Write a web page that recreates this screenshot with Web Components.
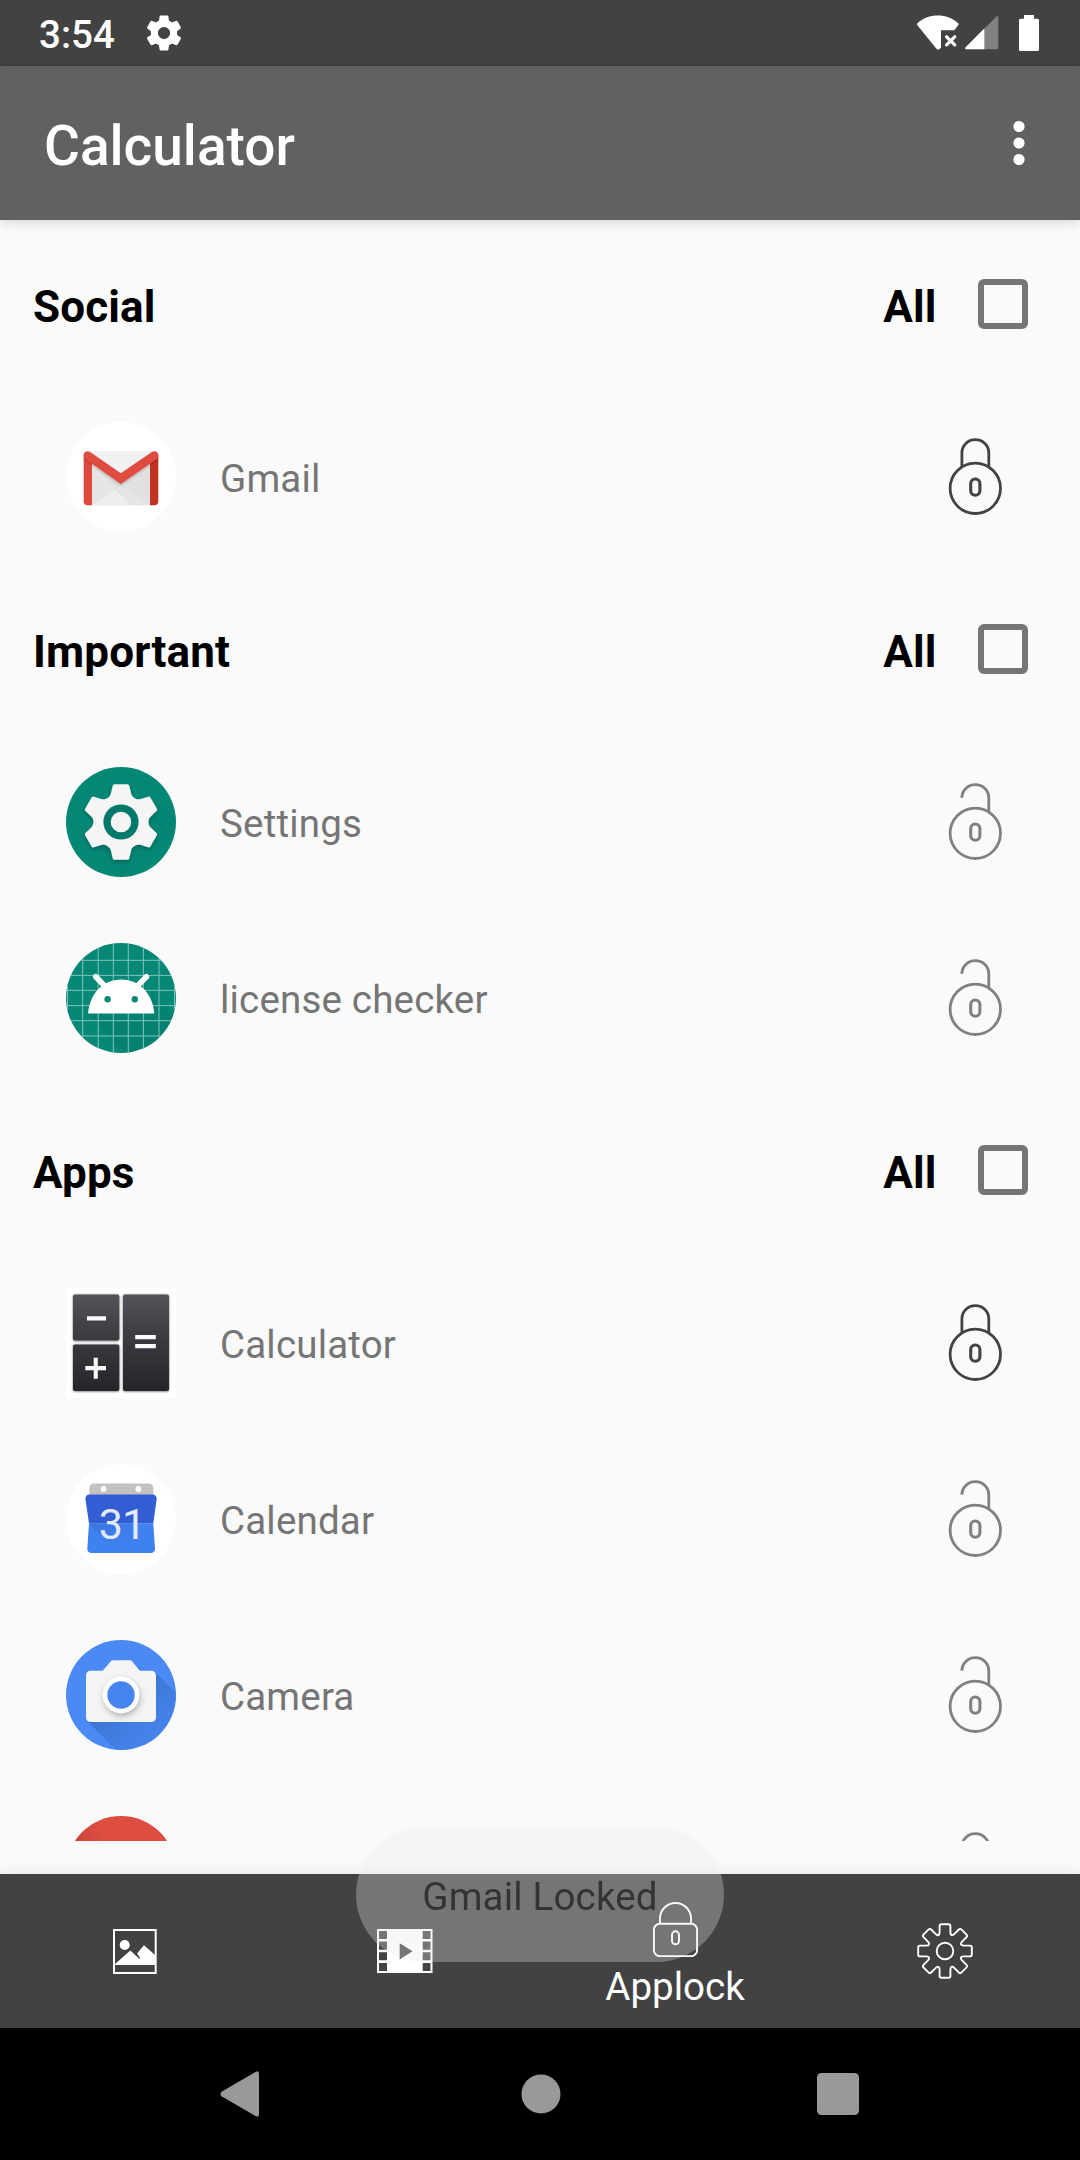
<!DOCTYPE html>
<html lang="en">
<head>
<meta charset="utf-8">
<title>Calculator</title>
<style>
html,body{margin:0;padding:0}
body{font-family:Roboto,"Noto Sans",sans-serif;width:1080px;height:2160px;overflow:hidden;background:#fafafa}
</style>
</head>
<body>
<phone-screen>
  <status-bar slot="top">3:54</status-bar>
  <app-bar slot="top">Calculator</app-bar>
  <app-section label="Social">
    <app-row icon="gmail" locked>Gmail</app-row>
  </app-section>
  <app-section label="Important">
    <app-row icon="settings">Settings</app-row>
    <app-row icon="android">license checker</app-row>
  </app-section>
  <app-section label="Apps">
    <app-row icon="calculator" locked>Calculator</app-row>
    <app-row icon="calendar">Calendar</app-row>
    <app-row icon="camera">Camera</app-row>
    <app-row icon="red"></app-row>
  </app-section>
  <tab-bar slot="bottom">
    <tab-item icon="image"></tab-item>
    <tab-item icon="film"></tab-item>
    <tab-item icon="lock">Applock</tab-item>
    <tab-item icon="gear"></tab-item>
  </tab-bar>
  <nav-bar slot="bottom"></nav-bar>
  <toast-message slot="toast">Gmail Locked</toast-message>
</phone-screen>
<script>
// Repeats one tooth (and the valley after it) around the origin.
function cog(n, pts) {
  const out = [];
  for (let k = 0; k < n; k++) {
    const a = k * 2 * Math.PI / n, c = Math.cos(a), s = Math.sin(a);
    for (const [cmd, ...v] of pts) {
      const r = [];
      for (let i = 0; i < v.length; i += 2) r.push((v[i]*c - v[i+1]*s).toFixed(2), (v[i]*s + v[i+1]*c).toFixed(2));
      out.push((k === 0 && cmd === 'M' ? 'M' : cmd === 'M' ? 'L' : cmd) + r.join(' '));
    }
  }
  return out.join('') + 'Z';
}
const outlineCog = cog(8, [['M',-5.4,-18.4],['L',-5.4,-25],['Q',-5.4,-26.8,-3.7,-26.8],['L',3.7,-26.8],['Q',5.4,-26.8,5.4,-25],['L',5.4,-18.4],['C',5.4,-15.6,7.4,-15.2,9.19,-16.83]]);
const solidCog = cog(6, [['M',-10.3,-27.8],['L',-8.3,-36.2],['Q',-8,-37.7,-6.5,-37.7],['L',6.5,-37.7],['Q',8,-37.7,8.3,-36.2],['L',10.3,-27.8],['C',11.2,-25,15.5,-22,18.93,-22.82]]);
const icons = {
gmail:`<defs><filter id="f" x="-10%" y="-10%" width="120%" height="140%"><feDropShadow dx="0" dy="1.5" stdDeviation="1.2" flood-opacity=".22"/></filter></defs><circle cx="55" cy="55" r="55" fill="#fff"/>
 <rect x="18" y="29.3" width="74" height="54" rx="4" fill="#e6e6e6"/>
 <path d="M26 83.3 55 64 84 83.3z" fill="#eee"/><path d="M26 42 64 83.3H84V40L55 62z" fill="#dcdcdc" opacity=".45"/>
 <path d="M22 29.3H88L55 51.5z" fill="#f1f1f1"/>
 <path d="M17.7 33V79.3a4 4 0 0 0 4 4H26V38z" fill="#df4a3f"/>
 <path d="M92.3 33V79.3a4 4 0 0 1-4 4H84V38z" fill="#c23321"/>
 <path filter="url(#f)" d="M17.7 33.3c0-3.6 3.6-5.2 6.4-3.2L54.8 51.2 85.900 30.100c2.800-2 6.400-.400 6.400 3.200 0 2-.8 3.200-2.400 4.300L54.800 62 20.100 37.600c-1.600-1.100-2.400-2.300-2.400-4.300z" fill="#e04b40"/>`,
settings:`<defs><linearGradient id="s" x2="1" y2="1"><stop offset=".3" stop-color="#00695c" stop-opacity=".55"/><stop offset=".8" stop-color="#00796b" stop-opacity="0"/></linearGradient><filter id="f"><feDropShadow dx="0" dy="2" stdDeviation="2" flood-opacity=".25"/></filter></defs>
 <circle cx="55" cy="55" r="55" fill="#058776"/><path d="M88 34 110 50V64L90 98 62 110 30 78z" fill="url(#s)" opacity=".35"/>
 <path d="${solidCog}" transform="translate(55 55)" fill="#f5f5f5" filter="url(#f)"/><circle cx="55" cy="55" r="17.6" fill="#00796b"/><circle cx="55" cy="55" r="10.3" fill="#f5f5f5"/>`,
android:`<defs><clipPath id="c"><circle cx="55" cy="55" r="55"/></clipPath></defs><circle cx="55" cy="55" r="55" fill="#078776"/>
 <g clip-path="url(#c)"><path d="M22 70 56 110H80L110 75 88 55z" fill="#006f62" opacity=".22"/>
 <path d="M1.500 0V110M16.700 0V110M32.200 0V110M47.300 0V110M62.300 0V110M77.400 0V110M93 0V110M108.500 0V110M0 17.300H110M0 32.400H110M0 47.300H110M0 62.600H110M0 77.700H110M0 93H110" stroke="#7fc4b9" stroke-width="1"/></g>
 <path d="M22 70.400C23.500 51 37 36.400 55.200 36.400S86.800 51 88.300 70.400z" fill="#fff"/><path d="M29.800 33.800 38.500 42.800M80.400 33.800 71.700 42.800" stroke="#fff" stroke-width="5.600" stroke-linecap="round"/>
 <circle cx="41.600" cy="56.300" r="3.200" fill="#078776"/><circle cx="68.800" cy="56.300" r="3.200" fill="#078776"/>`,
calculator:`<defs><linearGradient id="k" gradientUnits="userSpaceOnUse" x1="0" y1="6" x2="0" y2="103"><stop stop-color="#54545a"/><stop offset=".45" stop-color="#3b3a40"/><stop offset="1" stop-color="#26252a"/></linearGradient><filter id="f"><feDropShadow dx="0" dy=".5" stdDeviation=".8" flood-opacity=".6"/></filter></defs>
 <path d="M0 0H110V110H0z" fill="#fff"/><g fill="url(#k)" filter="url(#f)"><rect x="7" y="6.500" width="46.300" height="46" rx="2"/><rect x="7" y="56.500" width="46.300" height="46.500" rx="2"/><rect x="57" y="6.500" width="46" height="96.500" rx="2"/></g>
 <path d="M21 28.200h19v4.200H21zM19.300 78h20.700v4.200H19.300zM27.700 69.700h4.100v21h-4.100zM69.200 47h20.600v4.300H69.200zM69.200 55.900h20.600v4.300H69.200z" fill="#fafafa"/>`,
calendar:`<defs><linearGradient id="s" x2=".8" y2="1"><stop stop-color="#2d56c0" stop-opacity=".6"/><stop offset=".8" stop-color="#2d56c0" stop-opacity="0"/></linearGradient></defs><circle cx="55" cy="55" r="55" fill="#fff"/>
 <path d="M23.300 34V24a4.500 4.500 0 0 1 4.500-4.500H82.800A4.500 4.500 0 0 1 87.300 24V34z" fill="#c2c2c2"/><circle cx="37.500" cy="25" r="2.900" fill="#fff"/><circle cx="72.400" cy="25" r="2.900" fill="#fff"/>
 <path d="M23 59.300H87.300L89 84.700a4 4 0 0 1-4 4.200H25.300a4 4 0 0 1-4-4.200z" fill="#4081f0"/><path d="M23 59.300H65L75 88.900H53z" fill="url(#s)" opacity=".5"/>
 <path d="M19.400 34.800a4 4 0 0 1 4-4.300H86.700a4 4 0 0 1 4 4.300L87.300 59.300H23z" fill="#335dd3"/>
 <text x="56" y="75" text-anchor="middle" font-size="43" letter-spacing="-1" font-weight="400" font-family="Roboto" fill="#e2eafb">31</text>`,
camera:`<defs><clipPath id="c"><circle cx="55" cy="55" r="55"/></clipPath><linearGradient id="s" gradientUnits="userSpaceOnUse" x1="55" y1="55" x2="90" y2="100"><stop stop-color="#3466bd"/><stop offset="1" stop-color="#4380e8"/></linearGradient><filter id="f" x="-30%" y="-30%" width="160%" height="160%"><feDropShadow dx="1" dy="3" stdDeviation="3" flood-opacity=".28"/></filter></defs>
 <circle cx="55" cy="55" r="55" fill="#4b8af4"/><path clip-path="url(#c)" d="M89 32 120 63V120H60L21 81z" fill="url(#s)" opacity=".6"/>
 <path d="M24.500 30.700H36.700L44.700 21.500Q45.600 20.300 47.200 20.300H63.800Q65.300 20.300 66.300 21.500L73.700 30.700H85.500A4.500 4.500 0 0 1 90 35.200V77.500A4.500 4.500 0 0 1 85.500 82H24.500A4.500 4.500 0 0 1 20 77.500V35.200A4.500 4.500 0 0 1 24.500 30.700z" fill="#f4f4f4"/>
 <circle cx="55" cy="55" r="18.200" fill="#fff" filter="url(#f)"/><circle cx="55" cy="55" r="13.700" fill="#4684f0"/>`,
red:`<defs><linearGradient id="r" x1="0" y1=".3" x2=".4" y2="0"><stop stop-color="#bd4136"/><stop offset=".7" stop-color="#dd4d40"/></linearGradient></defs><circle cx="55" cy="55" r="55" fill="url(#r)"/>`
};
const tabs = {
image:[44,45,`<rect x="1" y="1" width="41.700" height="43" fill="none" stroke="#fff" stroke-width="2"/><circle cx="11.700" cy="16" r="5" fill="#fff"/><path d="M2 35 17.300 21.500 26.300 29.800 27.300 29 24 24.500 31 16.200 42 26V36H2z" fill="#fff"/>`],
film:[56,44,`<path fill="#fff" fill-rule="evenodd" d="M0 0H55.500V44H0zM2 2V10H10V2zM2 12.500V20.700H10V12.500zM2 23.300V31.300H10V23.300zM2 34V42H10V34zM45.700 2V10H53.500V2zM45.700 12.500V20.700H53.500V12.500zM45.700 23.300V31.300H53.500V23.300zM45.700 34V42H53.500V34zM22.700 14.200V30.200L35.600 22.200z"/>`],
lock:[45,55,`<g fill="none" stroke="#fff" stroke-width="1.900"><rect x=".9" y="21.700" width="43.200" height="32.500" rx="6"/><path d="M7 21.700V16.500a15.500 15.500 0 0 1 31 0V21.700"/><rect x="19" y="29.300" width="7" height="13" rx="3.500"/></g>`],
gear:[56,56,`<g transform="translate(28 28)" fill="none" stroke="#fff" stroke-width="1.900"><path d="${outlineCog}"/><circle r="8.300"/></g>`]
};
const define = (name, render) => customElements.define(name, class extends HTMLElement {
  constructor() { super(); this.attachShadow({mode:'open'}); }
  connectedCallback() { this.shadowRoot.innerHTML = render(this); }
});

define('phone-screen', () => `<style>
:host{display:flex;flex-direction:column;width:1080px;height:2160px;position:relative;background:#fafafa}
main{flex:1;min-height:0;display:flex;flex-direction:column;padding-bottom:33px}
.list{flex:1;min-height:0;overflow:hidden}
</style><slot name="top"></slot><main><div class="list"><slot></slot></div></main><slot name="bottom"></slot><slot name="toast"></slot>`);

define('status-bar', () => `<style>
:host{display:flex;align-items:center;height:66px;box-sizing:border-box;padding:0 41px 0 39px;background:#424242;color:#fff;font-size:38.500px;font-weight:500}
.t{width:104px;line-height:46px;padding-top:3px;white-space:nowrap}
svg{display:block}.sp{flex:1}.sig{margin-left:6px}.bat{margin-left:20px}
</style><span class="t"><slot></slot></span>
<svg width="42" height="42" viewBox="0 0 24 24" fill="#fff"><path d="M19.430 12.980c.040-.320.070-.640.070-.980s-.030-.660-.070-.980l2.110-1.650c.190-.150.240-.420.120-.640l-2-3.460c-.120-.220-.390-.300-.610-.220l-2.490 1c-.520-.400-1.080-.730-1.690-.980l-.380-2.650C14.460 2.180 14.250 2 14 2h-4c-.250 0-.460.180-.490.420l-.380 2.650c-.610.250-1.170.590-1.690.980l-2.490-1c-.230-.090-.490 0-.610.220l-2 3.460c-.130.220-.070.490.120.640l2.110 1.650c-.040.320-.070.650-.070.980s.030.660.070.980l-2.110 1.650c-.190.150-.240.420-.120.640l2 3.460c.120.220.390.300.610.220l2.490-1c.520.400 1.080.730 1.690.980l.380 2.650c.030.240.240.420.490.420h4c.250 0 .460-.180.490-.420l.380-2.650c.610-.250 1.170-.590 1.690-.980l2.490 1c.230.090.490 0 .610-.220l2-3.460c.120-.220.070-.490-.120-.640zM12 15.500a3.500 3.500 0 1 1 0-7 3.500 3.500 0 0 1 0 7z"/></svg>
<span class="sp"></span>
<svg width="42" height="36" viewBox="0 0 42 36"><path d="M.4 8.200C5.800 3 13 .400 20.800.400S35.800 3 41.200 8.200Q42 9.200 41.200 10.300L37.300 15.200H24V32.500Q21.500 36.500 18.800 33L.4 10.300Q-.3 9.200.400 8.200z" fill="#fff"/><path d="M29.600 21.800 37.700 29.900M37.700 21.800 29.600 29.900" stroke="#fff" stroke-width="3.200" stroke-linecap="round"/></svg>
<svg class="sig" width="34" height="34" viewBox="0 0 34 34"><path d="M31.500.500Q33.300-.5 33.300 1.500V31.800Q33.300 33.300 31.800 33.300H1.500Q-.8 33.300.7 31.300z" fill="#818181"/><path d="M19.300 12.500V33.300H1.500Q-.8 33.300.7 31.300z" fill="#fff"/></svg>
<svg class="bat" width="20" height="36" viewBox="0 0 20 36"><path d="M5 0H15V3.700H18.500Q20 3.700 20 5.200V34.500Q20 36 18.500 36H1.500Q0 36 0 34.500V5.200Q0 3.700 1.500 3.700H5z" fill="#fff"/></svg>`);

define('app-bar', () => `<style>
:host{display:flex;align-items:center;justify-content:space-between;height:154px;box-sizing:border-box;padding:0 55px 0 44px;background:#616161;color:#fff;font-size:55px;font-weight:500;box-shadow:0 2px 11px rgba(0,0,0,.16);position:relative;z-index:1}
span{line-height:64px;padding-top:5px}svg{display:block}
</style><span><slot></slot></span><svg width="12" height="46" fill="#fff"><circle cx="6" cy="6.500" r="5.600"/><circle cx="6" cy="23" r="5.600"/><circle cx="6" cy="39.500" r="5.600"/></svg>`);

define('app-section', el => `<style>
:host{display:block}
header{display:flex;align-items:center;height:169px;box-sizing:border-box;padding:0 52px 0 33px;font-size:44px;font-weight:700;color:#000;letter-spacing:.15px}
span{line-height:52px;padding-top:5px}.l{flex:1}
i{width:50px;height:50px;box-sizing:border-box;border:6px solid #757575;border-radius:6px;margin:0 0 2px 41.500px}
</style><header><span class="l">${el.getAttribute('label')}</span><span>All</span><i></i></header><slot></slot>`);

define('app-row', el => `<style>
:host{display:flex;align-items:center;height:176px;box-sizing:border-box;padding:0 78px 0 66px;font-size:38.500px;letter-spacing:.18px;color:#757575}
svg{display:block;flex:none}span{flex:1;margin-left:44px;line-height:46px;padding-top:4px}
</style><svg width="110" height="110" viewBox="0 0 110 110">${icons[el.getAttribute('icon')]}</svg><span><slot></slot></span>
<svg width="54" height="78" viewBox="0 0 54 78" fill="none" stroke-width="2.800" stroke="${el.hasAttribute('locked') ? '#424242' : '#808080'}"><circle cx="27.300" cy="50.300" r="25.200"/><rect x="22.700" y="41" width="9.200" height="16.200" rx="4.500" stroke-width="3.100"/>${el.hasAttribute('locked') ? '<path d="M13.900 28.500V14.700a13.400 13 0 0 1 26.900 0V28.500"/>' : '<path d="M13.900 14.700a13.400 13 0 0 1 26.900 0V28.500"/>'}</svg>`);

define('tab-bar', () => `<style>:host{display:flex;height:154px;background:#424242;box-shadow:0 -2px 14px rgba(0,0,0,.07)}</style><slot></slot>`);

define('tab-item', el => { const [w,h,s] = tabs[el.getAttribute('icon')]; return `<style>
:host{flex:1;display:flex;flex-direction:column;align-items:center;justify-content:center;color:#fff;font-size:38.500px}
svg{display:block}span{line-height:46px;margin-top:7px}span.e{display:none}
svg.t{margin-top:9px}
</style><svg class="${el.textContent ? 't' : ''}" width="${w}" height="${h}" viewBox="0 0 ${w} ${h}">${s}</svg><span class="${el.textContent ? '' : 'e'}"><slot></slot></span>`; });

define('nav-bar', () => `<style>
:host{display:flex;align-items:center;height:132px;box-sizing:border-box;padding:0 221px 0 220px;background:#000}
svg{display:block}.h{margin:0 auto 0 260.500px}
</style><svg width="40" height="46" fill="#999"><path d="M35.500 1Q39 -1 39 3V43Q39 47 35.500 45L1.500 25.300Q-.5 23 1.500 20.700z"/></svg><svg class="h" width="40" height="40" fill="#999"><circle cx="20" cy="20" r="19.500"/></svg><svg width="42" height="42" fill="#999"><rect width="42" height="42" rx="4.500"/></svg>`);

define('toast-message', () => `<style>
:host{position:absolute;left:356px;top:1827px;width:368px;height:135px;box-sizing:border-box;display:flex;align-items:center;justify-content:center;border-radius:68px;background:#ebebeb;color:#111;opacity:.3;font-size:38.500px;letter-spacing:.18px;z-index:2}
span{line-height:46px;padding-top:5px;white-space:nowrap}
</style><span><slot></slot></span>`);
</script>
</body>
</html>
